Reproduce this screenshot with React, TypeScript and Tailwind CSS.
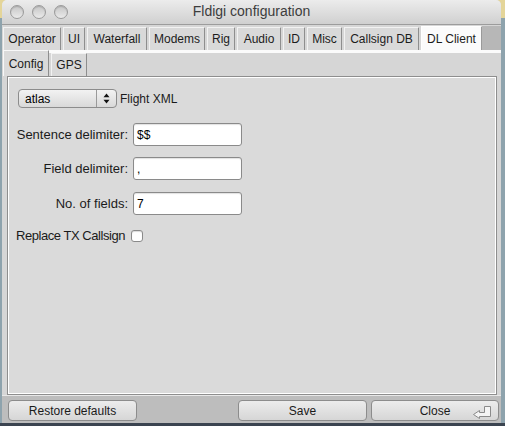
import React from "react";

const font = { fontFamily: '"Liberation Sans", Arial, sans-serif' };

function Tab({ label, w, selected }: { label: string; w: number; selected?: boolean }) {
  return (
    <div
      style={{ width: w }}
      className={
        "h-[23px] flex items-center justify-center text-[12px] text-[#1c1c1c] border-l border-t border-r rounded-tr-[1px] " +
        (selected
          ? "bg-[#fbfbfb] border-l-[#ffffff] border-t-[#ffffff] border-r-[#9a9a9a] h-[24px]"
          : "bg-[#d9d9d9] border-l-[#f2f2f2] border-t-[#f2f2f2] border-r-[#8e8e8e]")
      }
    >
      {label}
    </div>
  );
}

function Field({ label, value }: { label: string; value: string }) {
  return (
    <div className="flex items-center">
      <div className="w-[121px] text-right text-[13px] text-[#1a1a1a] pr-[1px]">{label}</div>
      <div className="ml-[4px] w-[109px] h-[23px] bg-white border border-[#8a8a8a] rounded-[3px] flex items-center pl-[3px] text-[12px] text-black shadow-[inset_0_1px_1px_rgba(0,0,0,0.12)]">
        {value}
      </div>
    </div>
  );
}

function Button({ label, w, children }: { label: string; w: number; children?: React.ReactNode }) {
  return (
    <div
      style={{ width: w }}
      className="relative h-[21px] rounded-[4px] border border-[#8c8c8c] bg-gradient-to-b from-[#ececec] to-[#d6d6d6] flex items-center justify-center text-[12px] text-[#1a1a1a]"
    >
      {label}
      {children}
    </div>
  );
}

export default function App() {
  const tabs: [string, number][] = [
    ["Operator", 58],
    ["UI", 22],
    ["Waterfall", 60],
    ["Modems", 56],
    ["Rig", 28],
    ["Audio", 44],
    ["ID", 22],
    ["Misc", 35],
    ["Callsign DB", 75],
  ];
  return (
    <div
      style={font}
      className="w-[505px] h-[426px] overflow-hidden bg-[linear-gradient(to_bottom,#e4d599_0px,#e4d599_18px,#8ea3ad_18px,#8ea3ad_423px,#3b4450_423px)] pl-[2px]"
    >
      <div className="w-[499px] h-[423px] flex flex-col bg-[#d6d6d6] rounded-t-[5px] overflow-hidden">
        {/* title bar */}
        <div className="relative h-[25px] shrink-0 flex items-center bg-gradient-to-b from-[#ececec] to-[#d0d0d0] border-b border-[#9c9c9c]">
          <div className="flex gap-[8px] ml-[8px]">
            {[0, 1, 2].map((i) => (
              <div
                key={i}
                className="w-[14px] h-[14px] rounded-full border border-[#9a9a9a] bg-gradient-to-b from-[#c6c6c6] to-[#eaeaea] shadow-[inset_0_1px_1px_rgba(0,0,0,0.15)]"
              />
            ))}
          </div>
          <div className="absolute inset-0 flex items-center justify-center text-[14px] text-[#3d3d3d] pb-[1px]">
            Fldigi configuration
          </div>
        </div>
        {/* row 1 tabs */}
        <div className="h-[25px] shrink-0 flex items-end bg-[#d6d6d6]">
          <div className="flex items-end gap-[2px] pl-[1px]">
            {tabs.map(([l, w]) => (
              <Tab key={l} label={l} w={w} />
            ))}
            <Tab label="DL Client" w={61} selected />
          </div>
          <div className="flex-1 h-[24px] bg-[#b7b7b7]" />
        </div>
        {/* row 2 tabs */}
        <div className="h-[26px] shrink-0 flex items-start">
          <div className="ml-[1px] w-[46px] h-[26px] bg-[#dadada] border-l border-t border-r border-l-[#f8f8f8] border-t-[#f8f8f8] border-r-[#8e8e8e] flex items-center justify-center text-[12px] text-[#1c1c1c] pt-[1px]">
            Config
          </div>
          <div className="flex-1 flex flex-col">
            <div className="h-[3px] bg-[#fbfbfb]" />
            <div className="flex items-start pl-[2px]">
              <div className="w-[36px] h-[23px] bg-[#d9d9d9] border-l border-t border-r border-l-[#f2f2f2] border-t-[#f2f2f2] border-r-[#8e8e8e] flex items-center justify-center text-[12px] text-[#1c1c1c]">
                GPS
              </div>
            </div>
          </div>
        </div>
        {/* panel */}
        <div className="h-[319px] shrink-0 ml-[5px] mr-[4px] bg-[#dadada] border border-[#8e8e8e] shadow-[inset_1px_1px_0_#ffffff,inset_-1px_-1px_0_#ffffff]">
          <div className="flex flex-col">
            <div className="mt-[12px] ml-[10px] flex items-center">
              <div className="w-[99px] h-[19px] rounded-[4px] border border-[#8c8c8c] bg-gradient-to-b from-[#f2f2f2] to-[#d9d9d9] flex items-center text-[12px] text-black">
                <div className="flex-1 pl-[6px]">atlas</div>
                <div className="w-[20px] h-full border-l border-[#9a9a9a] flex items-center justify-center">
                  <svg width="7" height="11" viewBox="0 0 7 11">
                    <path d="M3.5 0.5 L6.5 4.2 L0.5 4.2 Z" fill="#111" />
                    <path d="M3.5 10.5 L6.5 6.8 L0.5 6.8 Z" fill="#111" />
                  </svg>
                </div>
              </div>
              <div className="ml-[3px] text-[12px] text-[#1a1a1a]">Flight XML</div>
            </div>
            <div className="mt-[15px] flex flex-col gap-[11px]">
              <Field label="Sentence delimiter:" value="$$" />
              <Field label="Field delimiter:" value="," />
              <div className="mt-[1px]">
                <Field label="No. of fields:" value="7" />
              </div>
            </div>
            <div className="mt-[11px] ml-[8px] flex items-center">
              <div className="text-[13px] text-[#1a1a1a] tracking-[-0.45px]">Replace TX Callsign</div>
              <div className="ml-[6px] w-[12px] h-[12px] rounded-[3px] bg-white border border-[#8a8a8a] shadow-[inset_0_1px_1px_rgba(0,0,0,0.15)]" />
            </div>
          </div>
        </div>
        {/* bottom bar */}
        <div className="flex-1 bg-[#bdbdbd] flex items-start pt-[4px] pl-[6px] pr-[2px] border-t border-[#e8e8e8]">
          <Button label="Restore defaults" w={129} />
          <div className="flex-1" />
          <Button label="Save" w={129} />
          <div className="w-[4px]" />
          <Button label="Close" w={128}>
            <svg className="absolute right-[6px] top-[4px]" width="20" height="14" viewBox="0 0 20 14">
              <path
                d="M12.5 1.5 H18.5 V11.5 H7.5 V13.5 L1.5 9.5 L7.5 5.5 V7.5 H12.5 Z"
                fill="#f4f4f4"
                stroke="#8a8a8a"
                strokeWidth="1"
              />
            </svg>
          </Button>
        </div>
      </div>
    </div>
  );
}
